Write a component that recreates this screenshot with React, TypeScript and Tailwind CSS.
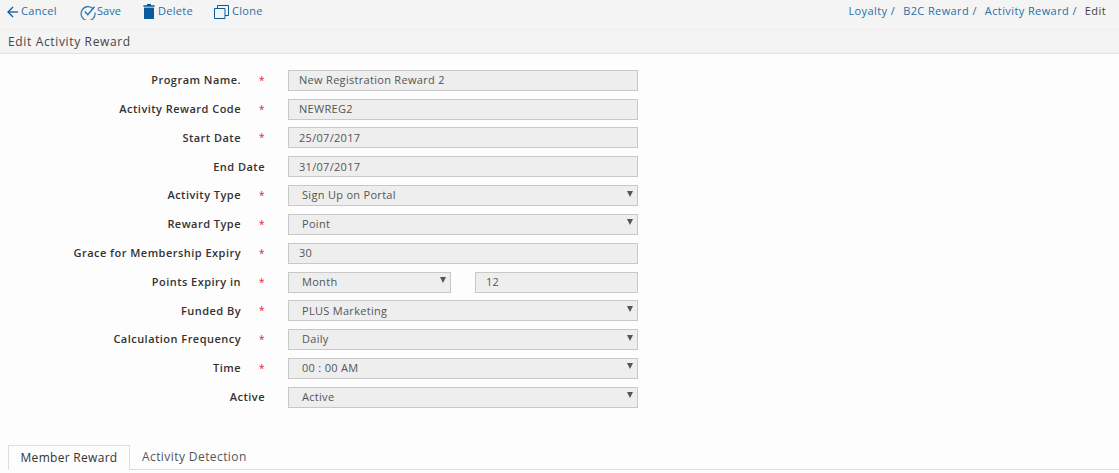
type Row = {
  label: string
  value: string
  required?: boolean
  select?: boolean
}

const ROWS: Row[] = [
  { label: 'Program Name.', value: 'New Registration Reward 2', required: true },
  { label: 'Activity Reward Code', value: 'NEWREG2', required: true },
  { label: 'Start Date', value: '25/07/2017', required: true },
  { label: 'End Date', value: '31/07/2017' },
  { label: 'Activity Type', value: 'Sign Up on Portal', required: true, select: true },
  { label: 'Reward Type', value: 'Point', required: true, select: true },
  { label: 'Grace for Membership Expiry', value: '30', required: true },
]

const ROWS_AFTER: Row[] = [
  { label: 'Funded By', value: 'PLUS Marketing', required: true, select: true },
  { label: 'Calculation Frequency', value: 'Daily', required: true, select: true },
  { label: 'Time', value: '00 : 00 AM', required: true, select: true },
  { label: 'Active', value: 'Active', select: true },
]

function Field({ value, select, className }: { value: string; select?: boolean; className: string }) {
  return (
    <div className={`h-[21px] flex items-center justify-between border border-[#c8c8c8] bg-[#eeeeee] text-[#555] tracking-[0.3px] ${select ? 'pl-[13px] pr-1' : 'pl-[10px]'} ${className}`}>
      <span>{value}</span>
      {select && <span className="w-0 h-0 border-x-[3px] border-x-transparent border-t-[6px] border-t-[#555] mb-1" />}
    </div>
  )
}

function Label({ label, required }: { label: string; required?: boolean }) {
  return (
    <div className="w-[288px] shrink-0 flex items-center justify-end font-semibold text-[#333] tracking-[0.47px]">
      <span>{label}</span>
      {required ? <span className="w-[24px] mr-[23px] text-right text-[10px] text-[#e8192c] font-normal">*</span> : <span className="w-[23px]" />}
    </div>
  )
}

export default function App() {
  return (
    <div className="w-[1119px] h-[473px] overflow-hidden bg-[#fdfdfd] text-[11px] tracking-[0.3px]" style={{ fontFamily: '"Open Sans", sans-serif' }}>
      <div className="h-[29px] bg-[#f4f4f4] flex items-center justify-between pl-[7px] pr-[13px] pb-[6px] text-[#2a6ea6]">
        <div className="flex items-center">
          <span className="flex items-center gap-[2px] w-[73px]">
            <svg width="12" height="12" viewBox="0 0 12 12" fill="none" stroke="#0b5a9c" strokeWidth="1.3">
              <path d="M11 6H1" />
              <path d="M6 1L1 6l5 5" />
            </svg>
            Cancel
          </span>
          <span className="flex items-center gap-px w-[63px]">
            <svg width="16" height="16" viewBox="0 0 16 16" fill="none" stroke="#2f75ad" strokeWidth="1.2">
              <path d="M13.5 5.2A7 7 0 1 0 15 8.5" />
              <path d="M4.8 7.5l3 3.2 6.7-8" strokeWidth="1.5" />
            </svg>
            <span className="tracking-normal">Save</span>
          </span>
          <span className="flex items-center gap-[3px] w-[71px]">
            <svg width="12" height="15" viewBox="0 0 12 15" fill="#0b5a9c">
              <path d="M4 0h4v1.2h3.6v1.6H.4V1.200H4z" />
              <path d="M1 3.600h10V15H1z" />
            </svg>
            Delete
          </span>
          <span className="flex items-center gap-[3px]">
            <svg width="15" height="14" viewBox="0 0 15 14" fill="none" stroke="#0b5a9c" strokeWidth="1">
              <path d="M.5 3.500h10.500v10H.5z" />
              <path d="M3.500 3.500v-3h11v10h-3.500" />
            </svg>
            Clone
          </span>
        </div>
        <div className="flex items-center tracking-[0.4px]">
          <span>Loyalty /</span>
          <span className="ml-2">B2C Reward /</span>
          <span className="ml-2">Activity Reward /</span>
          <span className="ml-2 text-[#444]">Edit</span>
        </div>
      </div>
      <div className="h-[25px] bg-[#f4f4f4] border-t border-t-[#eeeeee] border-b border-b-[#e4e4e4] flex items-center pl-2 text-[12px] text-[#444] tracking-[0.65px]">
        Edit Activity Reward
      </div>

      <div className="pt-[15.85px] flex flex-col gap-[7.82px]">
        {ROWS.map(r => (
          <div key={r.label} className="flex">
            <Label label={r.label} required={r.required} />
            <Field value={r.value} select={r.select} className="w-[350px]" />
          </div>
        ))}
        <div className="flex">
          <Label label="Points Expiry in" required />
          <Field value="Month" select className="w-[163px]" />
          <Field value="12" className="w-[163px] ml-6" />
        </div>
        {ROWS_AFTER.map(r => (
          <div key={r.label} className="flex">
            <Label label={r.label} required={r.required} />
            <Field value={r.value} select={r.select} className="w-[350px]" />
          </div>
        ))}
      </div>

      <div className="mt-[37px] ml-2 flex items-end h-[25px] border-b border-[#dddddd] text-[12px] tracking-[0.3px]">
        <div className="w-[122px] h-[25px] border border-[#dddddd] border-b-0 bg-[#fdfdfd] text-[#333] flex items-center justify-center -mb-px">Member Reward</div>
        <div className="ml-3 h-[25px] text-[#555] tracking-[0.42px] flex items-center pt-0.5">Activity Detection</div>
      </div>
    </div>
  )
}
